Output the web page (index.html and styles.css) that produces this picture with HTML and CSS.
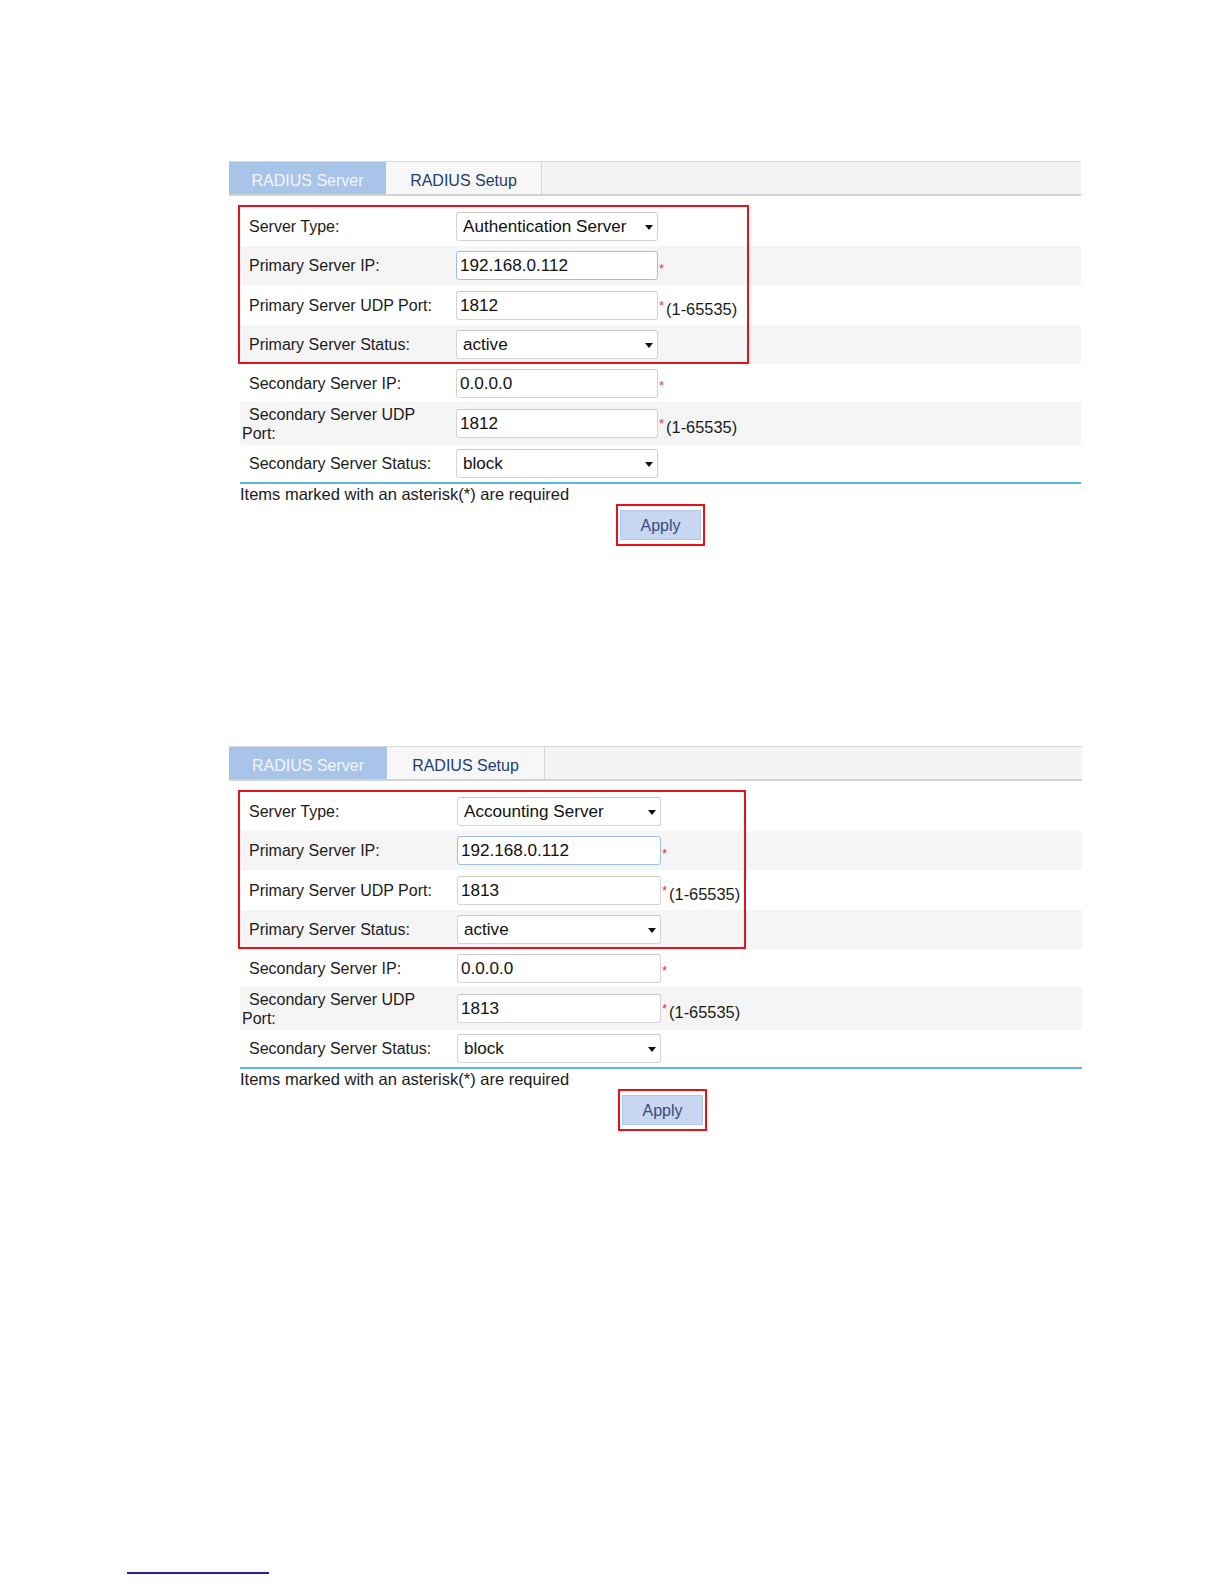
FILE: index.html
```html
<!DOCTYPE html>
<html lang="en">
<head>
<meta charset="utf-8">
<title>RADIUS Server</title>
<link rel="stylesheet" href="styles.css">
</head>
<body>
<div class="page">

  <section class="panel">
    <div class="tabs">
      <div class="tab tab-active">RADIUS Server</div>
      <div class="tab">RADIUS Setup</div>
      <div class="tab-fill"></div>
    </div>
    <div class="form">
      <div class="group">
        <div class="row row-a">
          <div class="label">Server Type:</div>
          <div class="field field-select">Authentication Server<span class="arrow"></span></div>
          <div class="extra"></div>
        </div>
        <div class="row row-b row-alt">
          <div class="label">Primary Server IP:</div>
          <div class="field field-focus">192.168.0.112</div>
          <div class="extra"><span class="req">*</span></div>
        </div>
        <div class="row row-a">
          <div class="label">Primary Server UDP Port:</div>
          <div class="field">1812</div>
          <div class="extra"><span class="req">*</span><span class="range">(1-65535)</span></div>
        </div>
        <div class="row row-b row-alt">
          <div class="label">Primary Server Status:</div>
          <div class="field field-select">active<span class="arrow"></span></div>
          <div class="extra"></div>
        </div>
      </div>
      <div class="row row-c">
        <div class="label">Secondary Server IP:</div>
        <div class="field">0.0.0.0</div>
        <div class="extra"><span class="req">*</span></div>
      </div>
      <div class="row row-alt row-tall">
        <div class="label">Secondary Server UDP Port:</div>
        <div class="field">1812</div>
        <div class="extra"><span class="req">*</span><span class="range">(1-65535)</span></div>
      </div>
      <div class="row row-last">
        <div class="label">Secondary Server Status:</div>
        <div class="field field-select">block<span class="arrow"></span></div>
        <div class="extra"></div>
      </div>
    </div>
    <div class="note">Items marked with an asterisk(*) are required</div>
    <div class="actions">
      <span class="btn-frame"><span class="btn">Apply</span></span>
    </div>
  </section>

  <section class="panel panel-second">
    <div class="tabs">
      <div class="tab tab-active">RADIUS Server</div>
      <div class="tab">RADIUS Setup</div>
      <div class="tab-fill"></div>
    </div>
    <div class="form">
      <div class="group">
        <div class="row row-a">
          <div class="label">Server Type:</div>
          <div class="field field-select">Accounting Server<span class="arrow"></span></div>
          <div class="extra"></div>
        </div>
        <div class="row row-b row-alt">
          <div class="label">Primary Server IP:</div>
          <div class="field field-focus">192.168.0.112</div>
          <div class="extra"><span class="req">*</span></div>
        </div>
        <div class="row row-a">
          <div class="label">Primary Server UDP Port:</div>
          <div class="field">1813</div>
          <div class="extra"><span class="req">*</span><span class="range">(1-65535)</span></div>
        </div>
        <div class="row row-b row-alt">
          <div class="label">Primary Server Status:</div>
          <div class="field field-select">active<span class="arrow"></span></div>
          <div class="extra"></div>
        </div>
      </div>
      <div class="row row-c">
        <div class="label">Secondary Server IP:</div>
        <div class="field">0.0.0.0</div>
        <div class="extra"><span class="req">*</span></div>
      </div>
      <div class="row row-alt row-tall">
        <div class="label">Secondary Server UDP Port:</div>
        <div class="field">1813</div>
        <div class="extra"><span class="req">*</span><span class="range">(1-65535)</span></div>
      </div>
      <div class="row row-last">
        <div class="label">Secondary Server Status:</div>
        <div class="field field-select">block<span class="arrow"></span></div>
        <div class="extra"></div>
      </div>
    </div>
    <div class="note">Items marked with an asterisk(*) are required</div>
    <div class="actions">
      <span class="btn-frame"><span class="btn">Apply</span></span>
    </div>
  </section>

  <div class="footnote-rule"></div>
</div>
</body>
</html>
```

FILE: styles.css
```css
html, body {
  margin: 0;
  padding: 0;
  background: #ffffff;
}

body {
  font-family: "Liberation Sans", Arial, sans-serif;
  color: #1a1a1a;
}

.page {
  padding-top: 161px;
  height: 1584px;
  box-sizing: border-box;
  overflow: hidden;
}

.panel {
  margin-left: 229px;
  width: 852px;
}

.panel-second {
  margin-top: 200px;
  width: 853px;
}

/* Tabs */
.tabs {
  display: flex;
  height: 32px;
  background: #f4f4f4;
  border-top: 1px solid #d8d8d8;
  border-bottom: 2px solid #d2d2d2;
}

.tab {
  width: 156px;
  display: flex;
  align-items: center;
  justify-content: center;
  padding-top: 5px;
  box-sizing: border-box;
  font-size: 16px;
  color: #233c72;
  background: #f7f7f7;
  border-right: 1px solid #d4d4d4;
}

.tab-active {
  width: 157px;
  background: #a9c4e9;
  color: #f2f6fd;
  border-right: none;
}

.panel-second .tab {
  width: 158px;
}

.tab-fill {
  flex: 1;
}

/* Form */
.form {
  margin-top: 10px;
  margin-left: 11px;
  width: 841px;
}

.panel-second .form {
  width: 842px;
}

.group {
  position: relative;
}

.group::after {
  content: "";
  position: absolute;
  left: -2px;
  top: -1px;
  width: 511px;
  bottom: 0;
  border: 2px solid #e8111b;
  box-sizing: border-box;
  pointer-events: none;
}

.panel-second .group::after {
  width: 508px;
}

.row {
  display: grid;
  grid-template-columns: 214px 202px 1fr;
  align-items: center;
  height: 40px;
  padding-left: 2px;
}

.panel-second .row {
  grid-template-columns: 215px 204px 1fr;
}

.row-b {
  height: 39px;
}

.row-c {
  height: 38px;
}

.row-alt {
  background: #f5f5f5;
}

.row-tall {
  height: 43px;
}

.row-last {
  height: 37px;
  border-bottom: 2px solid #5cb6e6;
}

.label {
  font-size: 16px;
  line-height: 19px;
  text-indent: 7px;
  padding-right: 12px;
  color: #1c1c1c;
}

.field {
  position: relative;
  height: 29px;
  box-sizing: border-box;
  border: 1px solid #d4d4d4;
  border-top-color: #c8c8c8;
  border-radius: 3px;
  background: #ffffff;
  padding: 1px 3px 0 3px;
  font-size: 17.1px;
  line-height: 26px;
  color: #111111;
  white-space: nowrap;
}

.field-select {
  padding-left: 6px;
}

.field-focus {
  border-color: #9cc0e8;
}

.arrow {
  position: absolute;
  right: 4px;
  top: 12px;
  width: 0;
  height: 0;
  border-left: 4.5px solid transparent;
  border-right: 4.5px solid transparent;
  border-top: 5px solid #111111;
}

.extra {
  display: flex;
  align-items: flex-end;
  padding-left: 1px;
  padding-top: 8px;
  white-space: nowrap;
}

.req {
  color: #e8333b;
  font-size: 13px;
  line-height: 16px;
  align-self: flex-start;
  margin-top: -2px;
  margin-right: 2px;
}

.range {
  font-size: 16.4px;
  line-height: 19px;
  color: #1a1a1a;
}

.note {
  margin-left: 11px;
  font-size: 16.5px;
  line-height: 20px;
  color: #1a1a1a;
}

.actions {
  margin-left: 11px;
  width: 841px;
  display: flex;
  justify-content: center;
}

.panel-second .actions {
  padding-left: 4px;
  box-sizing: border-box;
}

.btn-frame {
  display: block;
  border: 2px solid #e8111b;
  padding: 4px 2px;
}

.btn {
  display: flex;
  align-items: center;
  justify-content: center;
  width: 81px;
  height: 30px;
  box-sizing: border-box;
  padding-top: 2px;
  background: #c7d7f2;
  border: 1px solid #b3c6e6;
  font-size: 16px;
  color: #3a4a7c;
}

.footnote-rule {
  margin-top: 441px;
  margin-left: 127px;
  width: 142px;
  height: 2px;
  background: #2222a0;
}
```
